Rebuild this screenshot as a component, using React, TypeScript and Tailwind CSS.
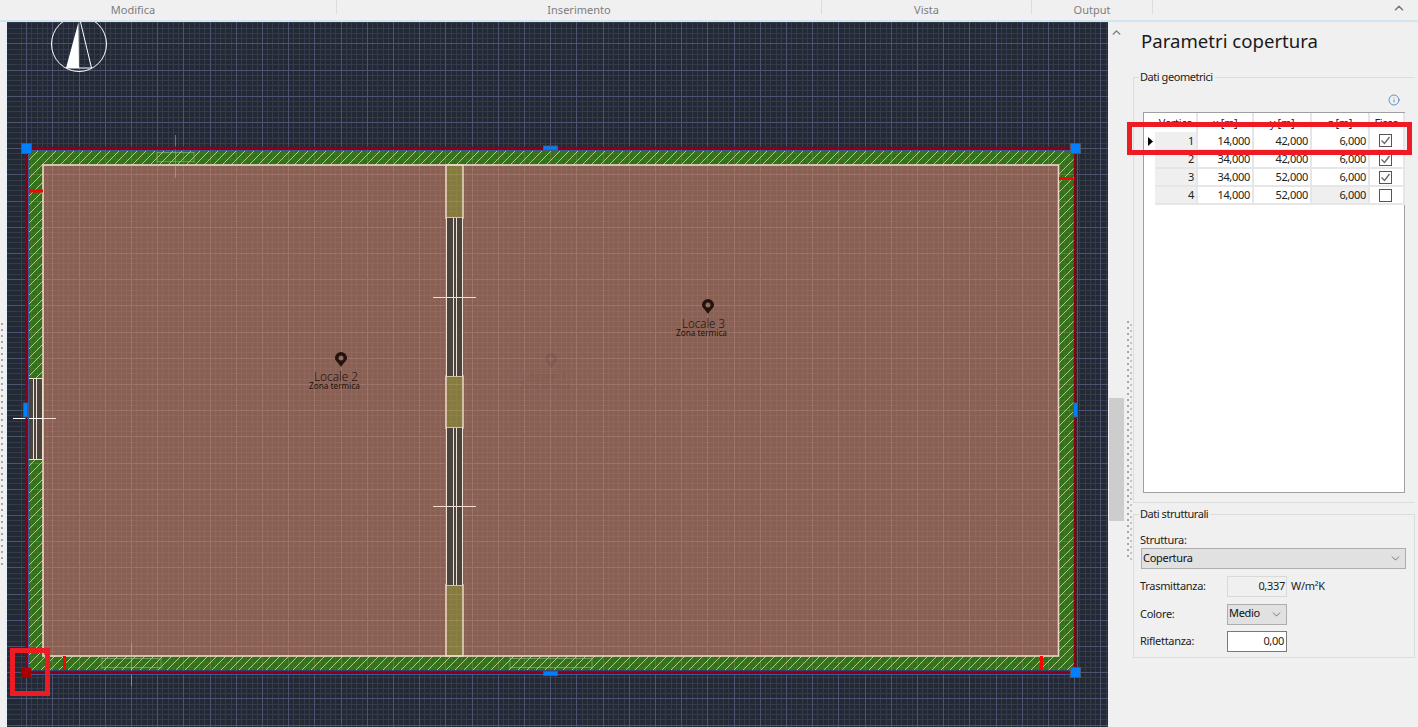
import React from "react";
import { ChevronUp, ChevronDown, Info } from "lucide-react";

const FONT = "font-['Noto_Sans','Open_Sans',sans-serif]";

function gridPaths() {
  const step = 26.2;
  const sub = step / 5;
  let minor = "";
  let major = "";
  for (let i = -1; i * sub < 1120; i++) {
    const x = Math.round(26.2 + i * sub);
    if (x < 0) continue;
    const d = `M${x} 0V730`;
    if (i % 5 === 0) major += d;
    else minor += d;
  }
  for (let i = -20; 17.1 + i * sub < 740; i++) {
    const y = Math.round(17.1 + i * sub);
    if (y < 0) continue;
    const d = `M0 ${y}H1120`;
    if (i % 5 === 0) major += d;
    else minor += d;
  }
  return { minor, major };
}

const PIN =
  "M6 15C3 10 0 9 0 6A6 6 0 1 1 12 6C12 9 9 10 6 15ZM6 3.5A2.5 2.5 0 1 0 6 8.5A2.5 2.5 0 1 0 6 3.5Z";

function Label({ name, px, py, x1, x2, base, zx1, zx2, zbase, color, opacity = 1 }: any) {
  return (
    <g opacity={opacity}>
      <path d={PIN} transform={`translate(${px} ${py})`} fill={color} fillRule="evenodd" />
      <text
        x={x1}
        y={base}
        fontSize="12.5"
        fontWeight="300"
        fill={color}
        fontFamily="'Noto Sans',sans-serif"
        textLength={x2 - x1}
        lengthAdjust="spacingAndGlyphs"
      >
        {name}
      </text>
      <text
        x={zx1}
        y={zbase}
        fontSize="9"
        fill={color}
        fontFamily="'Noto Sans',sans-serif"
        textLength={zx2 - zx1}
        lengthAdjust="spacingAndGlyphs"
      >
        Zona termica
      </text>
    </g>
  );
}

function WindowV({ y, h }: { y: number; h: number }) {
  return (
    <g>
      <rect x="446" y={y} width="17" height={h} fill="#4a433e" />
      <path
        d={`M446.5 ${y}v${h}M453 ${y}v${h}M456 ${y}v${h}M462.5 ${y}v${h}`}
        stroke="#efe0d4"
        strokeWidth="1"
        fill="none"
        shapeRendering="crispEdges"
      />
    </g>
  );
}

function Olive({ y, h }: { y: number; h: number }) {
  return <rect x="446" y={y} width="17" height={h} fill="#857b3e" stroke="#eed6c8" strokeWidth="1.5" />;
}

function Handle({ x, y, w, h, fill = "#0080ff" }: any) {
  return <rect x={x} y={y} width={w} height={h} fill={fill} stroke="#4d5a6b" strokeWidth="1" />;
}

function Drawing() {
  const { minor, major } = gridPaths();
  return (
    <svg viewBox="7 22 1101 705" className="block h-full w-full">
      <defs>
        <pattern id="hatch" width="9" height="9" patternUnits="userSpaceOnUse">
          <path d="M-1 10L10 -1M-1 1L1 -1M8 10L10 8" stroke="#cfdcaa" strokeWidth="0.8" />
        </pattern>
        <clipPath id="build">
          <rect x="29" y="151" width="1045" height="519" />
        </clipPath>
      </defs>
      <rect x="0" y="0" width="1120" height="730" fill="#232935" />
      <path d={minor} stroke="#343b4a" strokeWidth="1" shapeRendering="crispEdges" />
      <path d={major} stroke="#4d5371" strokeWidth="1" shapeRendering="crispEdges" />

      <circle cx="79" cy="44" r="27.5" fill="none" stroke="#fff" strokeWidth="1" />
      <path d="M78.5 22L66 68H79Z" fill="#fff" />
      <path d="M80.5 22L91.5 68H67" fill="none" stroke="#fff" strokeWidth="1" />

      <rect x="29" y="151" width="1045" height="519" fill="#33701a" />
      <rect x="29" y="151" width="1045" height="519" fill="url(#hatch)" />
      <rect x="43" y="165" width="1015.5" height="491" fill="#8a6054" />

      <Olive y={165} h={53} />
      <Olive y={376} h={52} />
      <Olive y={585} h={71} />

      <g clipPath="url(#build)">
        <path d={minor} stroke="#ffd8c8" strokeOpacity="0.06" strokeWidth="1" shapeRendering="crispEdges" />
        <path d={major} stroke="#ffd8c8" strokeOpacity="0.17" strokeWidth="1" shapeRendering="crispEdges" />
      </g>

      <rect x="43" y="165" width="1015.5" height="491" fill="none" stroke="#eed6c8" strokeWidth="1.6" />

      <rect x="29" y="378" width="14" height="81" fill="#4a433e" />
      <path d="M29 378H43M29 459H43M42.5 378v81M33 378v81M36 378v81" stroke="#efe0d4" strokeWidth="1" shapeRendering="crispEdges" />
      <WindowV y={218} h={158} />
      <WindowV y={428} h={157} />

      <path d="M157 152.5H194M157 161.5H194M157 152V163M194 152V163" stroke="#9fc78a" strokeWidth="1" fill="none" opacity="0.5" />
      <path d="M102 658.5H161M102 667.5H161M102 657V669M161 657V669" stroke="#9fc78a" strokeWidth="1" fill="none" opacity="0.5" />
      <path d="M510 658.5H592M510 667.5H592M510 657V669M592 657V669" stroke="#9fc78a" strokeWidth="1" fill="none" opacity="0.5" />
      <path d="M175.5 135V178M131.5 643V686" stroke="#b9b9b9" strokeWidth="1" opacity="0.5" />
      <path d="M433 297.5H476M433 506.5H476" stroke="#f0dcd0" strokeWidth="1" />
      <path d="M13 418.5H43" stroke="#fff" strokeWidth="1" />
      <path d="M43 418.5H56" stroke="#f0dcd0" strokeWidth="1" />

      <path d="M29 191H43M1059 178.5H1073" stroke="#ff0000" strokeWidth="3" />
      <path d="M64.5 656V670M1041.5 656V670" stroke="#ff0000" strokeWidth="3" />

      <path d="M28.5 150.5H1077.5V671M28.5 150.5V671H1077.5" fill="none" stroke="#3c5a96" strokeWidth="1" />
      <path d="M26.5 148H1075V672.5H26.5Z" fill="none" stroke="#8b0015" strokeWidth="2.4" />
      <path d="M22 674.5H1080" stroke="#3c5a96" strokeWidth="1" />

      <Handle x={21.5} y={143.5} w={10} h={10} />
      <Handle x={1070.5} y={143.5} w={10} h={10} />
      <Handle x={1070.5} y={667.5} w={10} h={10} />
      <rect x="21" y="668" width="10" height="10" fill="#a80000" />
      <Handle x={543.5} y={146} w={14} h={4} />
      <Handle x={543.5} y={671.5} w={14} h={4} />
      <Handle x={23.5} y={403} w={4} h={14} />
      <Handle x={1073.5} y={403} w={4} h={14} />

      <Label name="Locale 1" px={545} py={353} x1={523} x2={567} base={381} zx1={520} zx2={570} zbase={389} color="#3a241c" opacity={0.12} />
      <Label name="Locale 2" px={335} py={352} x1={314} x2={358} base={381} zx1={309} zx2={360} zbase={389} color="#21130d" />
      <Label name="Locale 3" px={702} py={299} x1={682} x2={725} base={328} zx1={676} zx2={727} zbase={336} color="#21130d" />
    </svg>
  );
}

const rows = [
  ["1", "14,000", "42,000", "6,000", true],
  ["2", "34,000", "42,000", "6,000", true],
  ["3", "34,000", "52,000", "6,000", true],
  ["4", "14,000", "52,000", "6,000", false],
] as const;

function Check({ on }: { on: boolean }) {
  return (
    <span className="ml-[9px] flex h-[13px] w-[13px] items-center justify-center border border-[#555] bg-white">
      {on && (
        <svg width="11" height="11" viewBox="0 0 11 11">
          <path d="M1.5 5.5L4.5 8.5L9.5 2" fill="none" stroke="#666" strokeWidth="1.3" />
        </svg>
      )}
    </span>
  );
}

const CELL =
  "h-[18px] border-r-2 border-b-2 border-[#e6e6e6] p-0 pr-[2px] text-right align-middle text-[11px] leading-[14px] tracking-[-0.3px] text-[#222]";

function VertexTable() {
  const th = "h-[19px] border-r-2 border-[#e6e6e6] bg-white p-0 text-center align-middle text-[11px] leading-[14px] font-normal tracking-[-0.3px] text-[#222]";
  return (
    <div className="h-[381px] w-[262px] border border-[#a0a0a0] bg-white">
      <table className="w-[260px] table-fixed border-collapse">
        <colgroup>
          <col className="w-[11px]" />
          <col className="w-[42px]" />
          <col className="w-[56px]" />
          <col className="w-[58px]" />
          <col className="w-[58px]" />
          <col className="w-[35px]" />
        </colgroup>
        <thead>
          <tr>
            <th className="h-[19px] bg-white p-0" />
            <th className={th}>Vertice</th>
            <th className={th}>x [m]</th>
            <th className={th}>y [m]</th>
            <th className={th}>z [m]</th>
            <th className={th}>Fisso</th>
          </tr>
        </thead>
        <tbody>
          {rows.map((r, i) => (
            <tr key={r[0]}>
              <td className="h-[18px] bg-white p-0 pl-[4px] align-middle">
                {i === 0 && (
                  <svg width="6" height="9" viewBox="0 0 6 9" className="block">
                    <path d="M0 0L5 4.5L0 9Z" fill="#000" />
                  </svg>
                )}
              </td>
              <td className={`${CELL} bg-[#efefef]`}>{r[0]}</td>
              <td className={`${CELL} bg-white`}>{r[1]}</td>
              <td className={`${CELL} bg-white`}>{r[2]}</td>
              <td className={i === 3 ? `${CELL} bg-[#efefef]` : `${CELL} bg-white`}>{r[3]}</td>
              <td className="h-[18px] border-r-2 border-b-2 border-[#e6e6e6] bg-white p-0 align-middle">
                <Check on={r[4]} />
              </td>
            </tr>
          ))}
        </tbody>
      </table>
    </div>
  );
}

function Legend({ children }: { children: React.ReactNode }) {
  return (
    <span className="absolute left-[5px] top-[-9px] bg-[#f0f0f0] pl-[1px] pr-[2px] text-[11px] leading-[16px] tracking-[-0.45px] text-[#222]">
      {children}
    </span>
  );
}

function PropRow({ label, children }: { label: string; children: React.ReactNode }) {
  return (
    <div className="flex h-[21px] items-center">
      <span className="w-[86px] text-[11px] tracking-[-0.3px] text-[#222]">{label}</span>
      {children}
    </div>
  );
}

function Panel() {
  return (
    <div className="w-[285px]">
      <div className="flex h-[55px] items-center pl-[8px] pb-[17px] text-[18.6px] text-[#1a1a1a]">Parametri copertura</div>

      <div className="relative h-[426px] w-[282px] border border-r-0 border-[#dcdcdc] pl-[9px]">
        <Legend>Dati geometrici</Legend>
        <div className="flex h-[34px] items-end justify-end pr-[15px] pb-[6px]">
          <Info size={12} className="text-[#3b78c4]" strokeWidth={1.6} />
        </div>
        <VertexTable />
      </div>

      <div className="relative mt-[11px] h-[144px] w-[282px] border border-[#dcdcdc] pl-[6px] pt-[17px]">
        <Legend>Dati strutturali</Legend>
        <div className="text-[11px] leading-[16px] tracking-[-0.3px] text-[#222]">Struttura:</div>
        <div className="ml-[1px] flex h-[21px] w-[265px] items-center justify-between border border-[#adadad] bg-[#e1e1e1] pl-[1px] pr-[3px] text-[11px] tracking-[-0.3px] text-[#111]">
          <span>Copertura</span>
          <ChevronDown size={13} className="text-[#555]" strokeWidth={1.4} />
        </div>
        <div className="mt-[7px]">
          <PropRow label="Trasmittanza:">
            <span className="ml-[1px] flex h-[21px] w-[60px] items-center justify-end border border-[#d9d9d9] bg-[#f0f0f0] pr-[1px] text-[11px] tracking-[-0.3px] text-[#222]">0,337</span>
            <span className="ml-[4px] text-[11px] tracking-[-0.3px] text-[#222]">W/m²K</span>
          </PropRow>
        </div>
        <div className="mt-[7px]">
          <PropRow label="Colore:">
            <span className="ml-[1px] flex h-[21px] w-[60px] items-center justify-between border border-[#adadad] bg-[#e1e1e1] pl-[1px] pr-[3px] pb-[2px] text-[11px] tracking-[-0.3px] text-[#111]">
              Medio
              <ChevronDown size={13} className="mt-[2px] text-[#555]" strokeWidth={1.4} />
            </span>
          </PropRow>
        </div>
        <div className="mt-[6px]">
          <PropRow label="Riflettanza:">
            <span className="ml-[1px] flex h-[21px] w-[60px] items-center justify-end border border-[#7a7a7a] bg-white pr-[2px] text-[11px] tracking-[-0.3px] text-[#222]">0,00</span>
          </PropRow>
        </div>
      </div>
    </div>
  );
}

function Tab({ label, className }: { label: string; className: string }) {
  return (
    <>
      <div className={`flex h-[20px] items-center justify-center text-[11px] text-[#7d7d7d] ${className}`}>{label}</div>
      <div className="h-[14px] w-px bg-[#dcdcdc]" />
    </>
  );
}

export default function App() {
  return (
    <div className={`relative flex h-[727px] w-[1418px] flex-col overflow-hidden bg-[#f0f0f0] ${FONT}`}>
      <div className="flex h-[20px] items-start">
        <Tab label="Modifica" className="w-[336px] pr-[70px]" />
        <Tab label="Inserimento" className="w-[484px]" />
        <Tab label="Vista" className="w-[209px]" />
        <Tab label="Output" className="w-[120px]" />
        <div className="flex h-[20px] flex-1 items-center justify-end pr-[12px] pb-[4px]">
          <ChevronUp size={14} strokeWidth={2.6} className="text-[#777]" />
        </div>
      </div>
      <div className="h-[2px] bg-[#d3e4f1]" />
      <div className="flex flex-1">
        <div className="w-[7px] border-r-2 border-[#e6f0f8]">
          <div className="ml-[1px] mt-[301px] h-[246px] w-[2px] bg-[linear-gradient(#a8a8a8_2px,transparent_2px)] bg-[length:2px_6px]" />
        </div>
        <div className="h-[705px] w-[1101px]">
          <Drawing />
        </div>
        <div className="flex w-[25px]">
          <div className="ml-[1px] w-[15px]">
            <div className="flex h-[20px] items-center justify-center pt-[1px]">
              <ChevronUp size={13} strokeWidth={2.6} className="text-[#777]" />
            </div>
            <div className="mt-[356px] h-[123px] bg-[#cdcdcd]" />
          </div>
          <div className="ml-[3px] mt-[299px] h-[240px] w-[2px] bg-[linear-gradient(#a8a8a8_2px,transparent_2px)] bg-[length:2px_6px]" />
          <div className="ml-[1px] mt-[302px] h-[240px] w-[2px] bg-[linear-gradient(#c4c4c4_2px,transparent_2px)] bg-[length:2px_6px]" />
        </div>
        <Panel />
      </div>
      <div className="absolute left-[1127px] top-[122px] h-[33px] w-[285px] border-[5px] border-[#ed1c24]" />
      <div className="absolute left-[10px] top-[648px] h-[48px] w-[40px] border-[5px] border-[#ed1c24]" />
    </div>
  );
}
